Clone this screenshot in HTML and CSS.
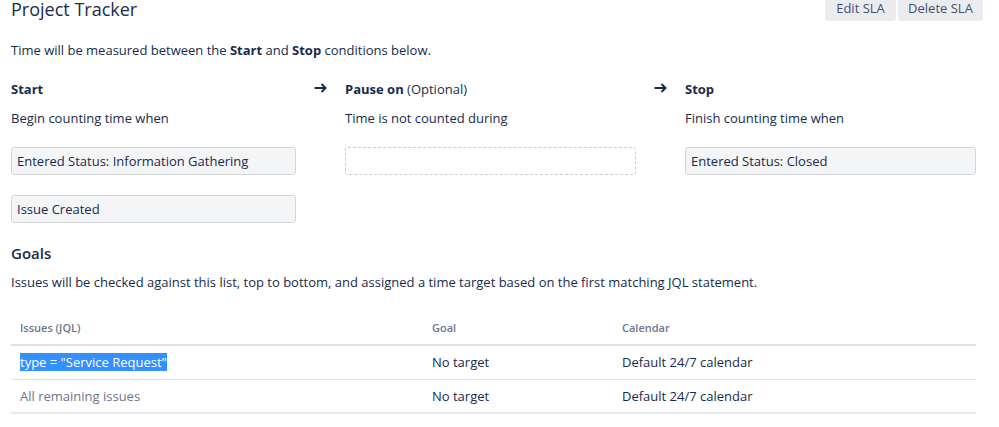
FILE: index.html
```html
<!DOCTYPE html>
<html lang="en">
<head>
<meta charset="utf-8">
<title>Project Tracker</title>
<link rel="stylesheet" href="styles.css">
</head>
<body>
<div class="page">
  <header class="top">
    <h1 class="title">Project Tracker</h1>
    <div class="actions">
      <button class="btn btn-edit" type="button">Edit SLA</button>
      <button class="btn btn-delete" type="button">Delete SLA</button>
    </div>
  </header>

  <p class="intro">Time will be measured between the <strong>Start</strong> and <strong>Stop</strong> conditions below.</p>

  <section class="conditions">
    <div class="cond cond-start">
      <h3 class="cond-title">Start</h3>
      <p class="cond-desc">Begin counting time when</p>
      <div class="chip">Entered Status: Information Gathering</div>
      <div class="chip">Issue Created</div>
    </div>
    <div class="arrow">
      <svg class="arrow-icon" width="13" height="10" viewBox="0 0 13 10" aria-hidden="true">
        <path d="M0.5 5H11.5M7.5 1L11.5 5L7.5 9" fill="none" stroke="#172b4d" stroke-width="2" stroke-linecap="butt" stroke-linejoin="miter"/>
      </svg>
    </div>
    <div class="cond cond-pause">
      <h3 class="cond-title">Pause on <span class="optional">(Optional)</span></h3>
      <p class="cond-desc">Time is not counted during</p>
      <div class="chip chip-empty"></div>
    </div>
    <div class="arrow">
      <svg class="arrow-icon" width="13" height="10" viewBox="0 0 13 10" aria-hidden="true">
        <path d="M0.5 5H11.5M7.5 1L11.5 5L7.5 9" fill="none" stroke="#172b4d" stroke-width="2" stroke-linecap="butt" stroke-linejoin="miter"/>
      </svg>
    </div>
    <div class="cond cond-stop">
      <h3 class="cond-title">Stop</h3>
      <p class="cond-desc">Finish counting time when</p>
      <div class="chip">Entered Status: Closed</div>
    </div>
  </section>

  <h2 class="goals-title">Goals</h2>
  <p class="goals-desc">Issues will be checked against this list, top to bottom, and assigned a time target based on the first matching JQL statement.</p>

  <table class="goals">
    <thead>
      <tr>
        <th class="col-jql">Issues (JQL)</th>
        <th class="col-goal">Goal</th>
        <th class="col-cal">Calendar</th>
      </tr>
    </thead>
    <tbody>
      <tr>
        <td><span class="selected">type = "Service Request"</span></td>
        <td>No target</td>
        <td>Default 24/7 calendar</td>
      </tr>
      <tr>
        <td class="muted">All remaining issues</td>
        <td>No target</td>
        <td>Default 24/7 calendar</td>
      </tr>
    </tbody>
  </table>
</div>
</body>
</html>
```

FILE: styles.css
```css
* { box-sizing: border-box; }

body {
  margin: 0;
  background: #ffffff;
  color: #172b4d;
  font-family: "Open Sans", "Noto Sans", sans-serif;
  font-size: 13px;
  line-height: 20px;
}

.page {
  padding: 0 16px 0 11px;
}

.top {
  display: flex;
  justify-content: space-between;
  align-items: flex-start;
  height: 21px;
}

.title {
  margin: 0;
  font-size: 18px;
  line-height: 19px;
  font-weight: 500;
  color: #172b4d;
}

.actions {
  display: flex;
  gap: 2px;
}

.btn {
  height: 21px;
  padding: 1px 10px 0;
  border: 0;
  border-radius: 0 0 3px 3px;
  background: #ebecf0;
  color: #42526e;
  font-family: inherit;
  font-size: 13px;
  line-height: 14px;
  display: flex;
  align-items: flex-start;
}

.btn-edit { width: 71px; justify-content: center; }
.btn-delete { width: 85px; justify-content: center; }

.intro {
  margin: 19px 0 0;
}

.conditions {
  display: grid;
  grid-template-columns: 285px 49px 291px 49px 291px;
  margin-top: 19px;
}

.cond-title {
  margin: 0;
  font-size: 13px;
  font-weight: 700;
  line-height: 20px;
}

.optional {
  font-weight: 400;
}

.cond-desc {
  margin: 9px 0 19px;
}

.arrow {
  padding-left: 18px;
  padding-top: 4px;
  height: 20px;
}

.arrow-icon {
  display: block;
}

.chip {
  height: 28px;
  padding: 0 5px;
  border: 1px solid #d3d5d9;
  border-radius: 3px;
  background: #f4f5f7;
  line-height: 26px;
  color: #172b4d;
}

.chip + .chip {
  margin-top: 20px;
}

.chip-empty {
  background: transparent;
  border: 1px dashed #c9ccd2;
}

.goals-title {
  margin: 20px 0 0;
  font-size: 15px;
  font-weight: 600;
  line-height: 20px;
}

.goals-desc {
  margin: 9px 0 0;
}

.goals {
  width: 965px;
  margin-top: 20px;
  border-collapse: collapse;
}

.goals th {
  text-align: left;
  font-size: 11px;
  font-weight: 600;
  color: #6b778c;
  padding: 6px 9px 6px;
  line-height: 20px;
  border-bottom: 2px solid #dfe1e6;
}

.goals .col-jql { width: 412px; }
.goals .col-goal { width: 190px; }

.goals td {
  padding: 6px 9px 6px;
  line-height: 20px;
  border-bottom: 1px solid #dfe1e6;
  color: #172b4d;
}

.goals tbody tr:first-child td {
  padding-bottom: 7px;
}

.goals tbody tr:last-child td {
  border-bottom: 2px solid #e6e8ec;
}

.goals td.muted {
  color: #6b778c;
}

.selected {
  background: #3390ff;
  color: #ffffff;
}
```
